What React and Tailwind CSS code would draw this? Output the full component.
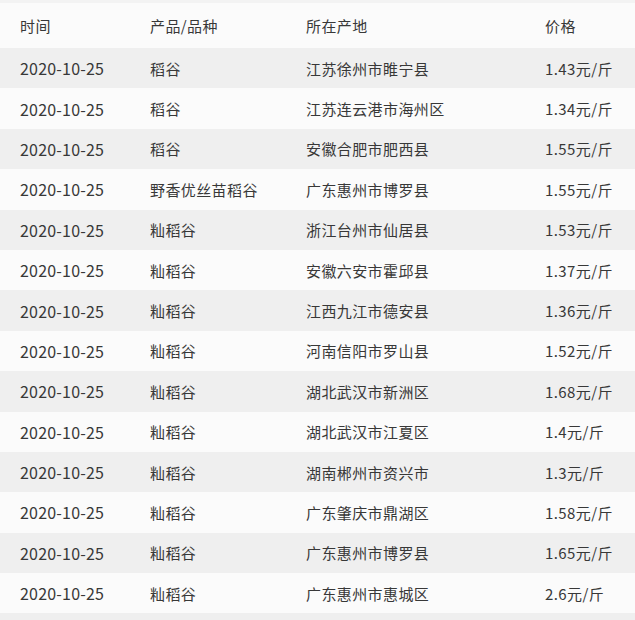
import React from 'react';

const rows = [
    ['2020-10-25', '稻谷', '江苏徐州市睢宁县', '1.43元/斤'],
    ['2020-10-25', '稻谷', '江苏连云港市海州区', '1.34元/斤'],
    ['2020-10-25', '稻谷', '安徽合肥市肥西县', '1.55元/斤'],
    ['2020-10-25', '野香优丝苗稻谷', '广东惠州市博罗县', '1.55元/斤'],
    ['2020-10-25', '籼稻谷', '浙江台州市仙居县', '1.53元/斤'],
    ['2020-10-25', '籼稻谷', '安徽六安市霍邱县', '1.37元/斤'],
    ['2020-10-25', '籼稻谷', '江西九江市德安县', '1.36元/斤'],
    ['2020-10-25', '籼稻谷', '河南信阳市罗山县', '1.52元/斤'],
    ['2020-10-25', '籼稻谷', '湖北武汉市新洲区', '1.68元/斤'],
    ['2020-10-25', '籼稻谷', '湖北武汉市江夏区', '1.4元/斤'],
    ['2020-10-25', '籼稻谷', '湖南郴州市资兴市', '1.3元/斤'],
    ['2020-10-25', '籼稻谷', '广东肇庆市鼎湖区', '1.58元/斤'],
    ['2020-10-25', '籼稻谷', '广东惠州市博罗县', '1.65元/斤'],
    ['2020-10-25', '籼稻谷', '广东惠州市惠城区', '2.6元/斤'],
];

const Row = ({ cells, className, header }) => (
    <div className={`grid grid-cols-[130px_156px_239px_1fr] items-center pl-[20px] ${className}`}>
        {cells.map((c, i) => (
            <div
                key={i}
                className={`whitespace-nowrap ${i === 0 && !header ? 'text-[16px] tracking-[0.2px]' : ''}`}
            >
                {c}
            </div>
        ))}
    </div>
);

const App = () => {
    return (
        <div
            className="w-[635px] h-[620px] overflow-hidden bg-[#fbfbfb] text-[#383838] text-[15px] tracking-[0.4px] leading-none"
            style={{ fontFamily: '"Noto Sans CJK SC", "Noto Sans", sans-serif' }}
        >
            {/* header */}
            <div className="h-[3px] bg-[#f3f3f3]" />
            <Row header cells={['时间', '产品/品种', '所在产地', '价格']} className="h-[45px] bg-[#fbfbfb]" />

            {rows.map((r, i) => (
                <Row
                    key={i}
                    cells={r}
                    className={`h-[40.4px] ${i % 2 === 0 ? 'bg-[#efefef]' : 'bg-[#fbfbfb]'}`}
                />
            ))}
            <div className="h-[20px] bg-[#efefef]" />
        </div>
    );
};

export default App;
